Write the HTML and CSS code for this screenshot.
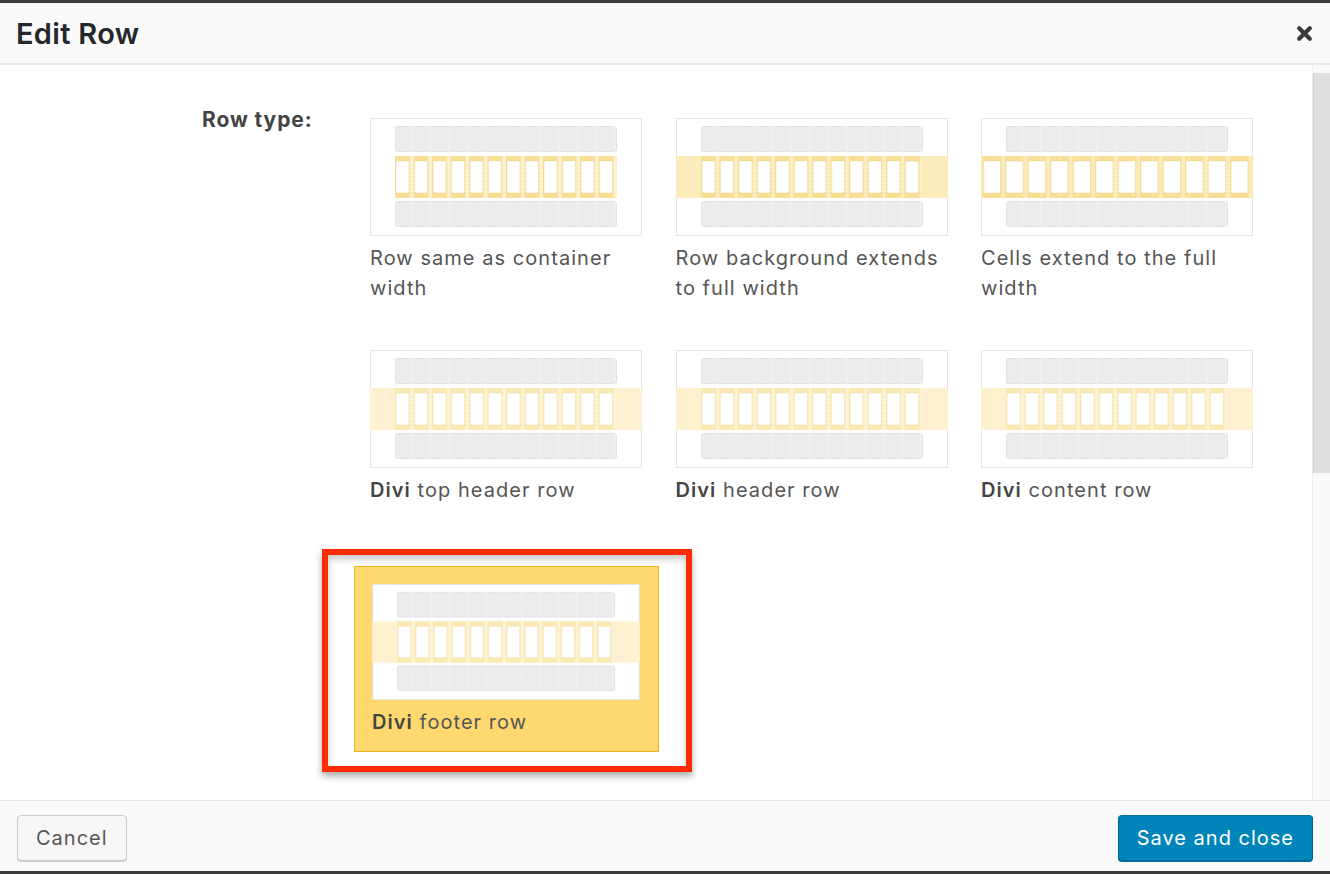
FILE: index.html
```html
<!DOCTYPE html>
<html lang="en">
<head>
    <meta charset="UTF-8">
    <title>Edit Row</title>
    <link rel="stylesheet" href="styles.css">
</head>
<body>
    <svg class="defs" width="0" height="0" aria-hidden="true">
        <defs>
            <pattern id="cells" x="25" y="38" width="18.5" height="42" patternUnits="userSpaceOnUse">
                <rect x="0" y="0" width="15" height="42" fill="#f9df96"/>
                <rect x="1" y="5" width="13" height="32" fill="#fff" stroke="#e9cc78" stroke-width="0.8" stroke-dasharray="1 1"/>
            </pattern>
            <pattern id="cells-full" x="1.5" y="38" width="22.5" height="42" patternUnits="userSpaceOnUse">
                <rect x="0" y="0" width="19" height="42" fill="#f9df96"/>
                <rect x="1" y="5" width="17" height="32" fill="#fff" stroke="#e9cc78" stroke-width="0.8" stroke-dasharray="1 1"/>
            </pattern>
            <pattern id="cells-light" x="25" y="38" width="18.5" height="42" patternUnits="userSpaceOnUse">
                <rect x="0" y="0" width="15" height="42" fill="#fbe8b3"/>
                <rect x="1" y="5" width="13" height="32" fill="#fff" stroke="#ecd493" stroke-width="0.8" stroke-dasharray="1 1"/>
            </pattern>
            <pattern id="streaks" x="25" y="0" width="18.5" height="4" patternUnits="userSpaceOnUse">
                <rect x="15.5" y="0" width="2" height="2" fill="#fff" opacity="0.35"/>
            </pattern>
        </defs>
    </svg>

    <div class="topbar"></div>

    <div class="modal">
        <div class="modal-header">
            <h1 class="modal-title">Edit Row</h1>
            <button class="close-btn" aria-label="Close">
                <svg width="17" height="17" viewBox="0 0 17 17">
                    <path d="M3.2 3.2 L13.8 13.8 M13.8 3.2 L3.2 13.8" stroke="#3a3a3a" stroke-width="4.2" stroke-linecap="round"/>
                </svg>
            </button>
        </div>

        <div class="modal-body">
            <div class="body-main">
                <div class="field">
                    <label class="field-label">Row type:</label>
                    <div class="row-types">
                        <div class="row-type">
                            <svg class="thumb" viewBox="0 0 272 118">
                                <rect x="0.5" y="0.5" width="271" height="117" fill="#fff" stroke="#e4e4e4"/>
                                <rect x="25.5" y="8.5" width="221" height="25" rx="2" fill="#ececec" stroke="#e2e2e2"/>
                                <rect x="25" y="38" width="222" height="42" fill="#fcf0cd"/>
                                <rect x="25" y="38" width="222" height="42" fill="url(#cells)"/>
                                <rect x="25.5" y="83.5" width="221" height="25" rx="2" fill="#ececec" stroke="#e2e2e2"/>
                                <rect x="25" y="8" width="222" height="101" fill="url(#streaks)"/>
                            </svg>
                            <div class="row-type-name">Row same as container width</div>
                        </div>
                        <div class="row-type">
                            <svg class="thumb" viewBox="0 0 272 118">
                                <rect x="0.5" y="0.5" width="271" height="117" fill="#fff" stroke="#e4e4e4"/>
                                <rect x="25.5" y="8.5" width="221" height="25" rx="2" fill="#ececec" stroke="#e2e2e2"/>
                                <rect x="0" y="38" width="272" height="42" fill="#fcecbc"/>
                                <rect x="25" y="38" width="222" height="42" fill="url(#cells)"/>
                                <rect x="25.5" y="83.5" width="221" height="25" rx="2" fill="#ececec" stroke="#e2e2e2"/>
                                <rect x="25" y="8" width="222" height="101" fill="url(#streaks)"/>
                            </svg>
                            <div class="row-type-name">Row background extends to full width</div>
                        </div>
                        <div class="row-type">
                            <svg class="thumb" viewBox="0 0 272 118">
                                <rect x="0.5" y="0.5" width="271" height="117" fill="#fff" stroke="#e4e4e4"/>
                                <rect x="25.5" y="8.5" width="221" height="25" rx="2" fill="#ececec" stroke="#e2e2e2"/>
                                <rect x="0" y="38" width="272" height="42" fill="#fcecbc"/>
                                <rect x="0" y="38" width="272" height="42" fill="url(#cells-full)"/>
                                <rect x="25.5" y="83.5" width="221" height="25" rx="2" fill="#ececec" stroke="#e2e2e2"/>
                                <rect x="25" y="8" width="222" height="101" fill="url(#streaks)"/>
                            </svg>
                            <div class="row-type-name">Cells extend to the full width</div>
                        </div>
                        <div class="row-type">
                            <svg class="thumb" viewBox="0 0 272 118">
                                <rect x="0.5" y="0.5" width="271" height="117" fill="#fff" stroke="#e4e4e4"/>
                                <rect x="25.5" y="8.5" width="221" height="25" rx="2" fill="#ececec" stroke="#e2e2e2"/>
                                <rect x="0" y="38" width="272" height="42" fill="#fdf1d0"/>
                                <rect x="25" y="38" width="222" height="42" fill="url(#cells-light)"/>
                                <rect x="25.5" y="83.5" width="221" height="25" rx="2" fill="#ececec" stroke="#e2e2e2"/>
                                <rect x="25" y="8" width="222" height="101" fill="url(#streaks)"/>
                            </svg>
                            <div class="row-type-name"><b>Divi</b> top header row</div>
                        </div>
                        <div class="row-type">
                            <svg class="thumb" viewBox="0 0 272 118">
                                <rect x="0.5" y="0.5" width="271" height="117" fill="#fff" stroke="#e4e4e4"/>
                                <rect x="25.5" y="8.5" width="221" height="25" rx="2" fill="#ececec" stroke="#e2e2e2"/>
                                <rect x="0" y="38" width="272" height="42" fill="#fdf1d0"/>
                                <rect x="25" y="38" width="222" height="42" fill="url(#cells-light)"/>
                                <rect x="25.5" y="83.5" width="221" height="25" rx="2" fill="#ececec" stroke="#e2e2e2"/>
                                <rect x="25" y="8" width="222" height="101" fill="url(#streaks)"/>
                            </svg>
                            <div class="row-type-name"><b>Divi</b> header row</div>
                        </div>
                        <div class="row-type">
                            <svg class="thumb" viewBox="0 0 272 118">
                                <rect x="0.5" y="0.5" width="271" height="117" fill="#fff" stroke="#e4e4e4"/>
                                <rect x="25.5" y="8.5" width="221" height="25" rx="2" fill="#ececec" stroke="#e2e2e2"/>
                                <rect x="0" y="38" width="272" height="42" fill="#fdf1d0"/>
                                <rect x="25" y="38" width="222" height="42" fill="url(#cells-light)"/>
                                <rect x="25.5" y="83.5" width="221" height="25" rx="2" fill="#ececec" stroke="#e2e2e2"/>
                                <rect x="25" y="8" width="222" height="101" fill="url(#streaks)"/>
                            </svg>
                            <div class="row-type-name"><b>Divi</b> content row</div>
                        </div>
                        <div class="row-type selected">
                            <svg class="thumb" viewBox="0 0 272 118">
                                <rect x="0.5" y="0.5" width="271" height="117" fill="#fff" stroke="#e4e4e4"/>
                                <rect x="25.5" y="8.5" width="221" height="25" rx="2" fill="#ececec" stroke="#e2e2e2"/>
                                <rect x="0" y="38" width="272" height="42" fill="#fdf1d0"/>
                                <rect x="25" y="38" width="222" height="42" fill="url(#cells-light)"/>
                                <rect x="25.5" y="83.5" width="221" height="25" rx="2" fill="#ececec" stroke="#e2e2e2"/>
                                <rect x="25" y="8" width="222" height="101" fill="url(#streaks)"/>
                            </svg>
                            <div class="row-type-name"><b>Divi</b> footer row</div>
                        </div>
                    </div>
                </div>
            </div>
            <div class="scrollbar">
                <div class="scroll-thumb"></div>
            </div>
        </div>

        <div class="modal-footer">
            <button class="btn">Cancel</button>
            <button class="btn btn-primary">Save and close</button>
        </div>
    </div>

    <div class="bottombar"></div>
</body>
</html>
```

FILE: styles.css
```css
body {
    margin: 0;
    height: 874px;
    display: flex;
    flex-direction: column;
    overflow: hidden;
    font-family: Inter, "Noto Sans", sans-serif;
    background-color: #fff;
}

.defs {
    position: absolute;
}

.topbar,
.bottombar {
    height: 3px;
    background-color: #3d3d3d;
}

.modal {
    flex: 1;
    display: flex;
    flex-direction: column;
    min-height: 0;
}

.modal-header {
    height: 60px;
    display: flex;
    align-items: center;
    justify-content: space-between;
    padding: 0 17px 0 16px;
    background-color: #fafafa;
    border-bottom: 2px solid #e8e8e8;
}

.modal-title {
    margin: 0;
    font-size: 29px;
    font-weight: 600;
    letter-spacing: 0.3px;
    color: #23282d;
}

.close-btn {
    border: none;
    background: none;
    padding: 0;
    width: 17px;
    height: 17px;
    cursor: pointer;
}

.close-btn svg {
    display: block;
}

.modal-body {
    flex: 1;
    display: flex;
    min-height: 0;
}

.body-main {
    flex: 1;
    padding-top: 37px;
    background-color: #fff;
}

.scrollbar {
    width: 17px;
    padding-top: 8px;
    background-color: #fafafa;
    border-left: 1px solid #ececec;
}

.scroll-thumb {
    height: 400px;
    background-color: #dedede;
    border-left: 1px solid #cfcfcf;
}

.field {
    display: flex;
    padding-left: 202px;
}

.field-label {
    width: 152px;
    margin-top: 3px;
    font-size: 21px;
    line-height: 29px;
    font-weight: 700;
    letter-spacing: 0.9px;
    color: #444;
}

.row-types {
    display: grid;
    grid-template-columns: repeat(3, 305.5px);
    grid-auto-rows: 186px;
    row-gap: 46px;
}

.row-type {
    position: relative;
    box-sizing: border-box;
    padding: 15px;
    border: 1px solid transparent;
}

.thumb {
    display: block;
    width: 272px;
    height: 118px;
}

.row-type-name {
    margin-top: 7px;
    font-size: 20px;
    line-height: 30px;
    color: #555;
    letter-spacing: 1.05px;
}

.row-type-name b {
    font-weight: 600;
    color: #444;
}

.row-type.selected {
    width: 305px;
    padding: 17px 16px 15px 17px;
    background-color: #ffd86f;
    border-color: #f2b31c;
}

.row-type.selected .thumb {
    width: 268px;
    height: 116px;
}

.row-type.selected::after {
    content: '';
    position: absolute;
    left: -33px;
    top: -18px;
    width: 370px;
    height: 223px;
    box-sizing: border-box;
    border: 6px solid #ff2b06;
    box-shadow: 0 4px 7px rgba(0,0,0,0.35), inset 0 4px 7px rgba(0,0,0,0.22);
    pointer-events: none;
}

.modal-footer {
    height: 71px;
    box-sizing: border-box;
    display: flex;
    align-items: flex-start;
    justify-content: space-between;
    padding: 14px 17px 0 17px;
    background-color: #fafafa;
    border-top: 1px solid #e5e5e5;
}

.btn {
    height: 46px;
    padding: 0 18px;
    font-family: inherit;
    font-size: 20px;
    letter-spacing: 1px;
    color: #555;
    background-color: #f7f7f7;
    border: 1px solid #ccc;
    border-radius: 4px;
    box-shadow: 0 1px 0 #ccc;
    cursor: pointer;
}

.btn-primary {
    color: #fff;
    background-color: #0085ba;
    border-color: #0073aa #006799 #006799;
    box-shadow: 0 1px 0 #006799;
}
```
